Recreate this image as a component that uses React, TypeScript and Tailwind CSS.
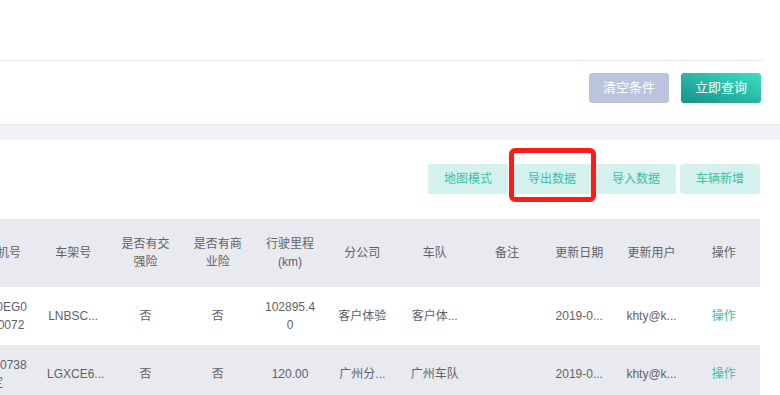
import React from 'react'

const font = { fontFamily: '"Liberation Sans", "Noto Sans CJK SC", sans-serif' }

const headers = ['发动机号', '车架号', '是否有交强险', '是否有商业险', '行驶里程(km)', '分公司', '车队', '备注', '更新日期', '更新用户', '操作']

const rows = [
  { engine: ['4A1S0EG0', '00B00072'], vin: 'LNBSC...', jq: '否', sy: '否', km: '102895.40', branch: '客户体验', team: '客户体...', note: '', date: '2019-0...', user: 'khty@k...' },
  { engine: ['SQR40738', '定'], vin: 'LGXCE6...', jq: '否', sy: '否', km: '120.00', branch: '广州分...', team: '广州车队', note: '', date: '2019-0...', user: 'khty@k...' },
]

export default function App() {
  return (
    <div className="w-[780px] h-[395px] overflow-hidden bg-[#f0f2f5]" style={font}>
      {/* 查询条件 */}
      <div className="bg-white h-[124px] pr-[17px]">
        <div className="h-[61px] border-b border-[#e3e8ee]" />
        <div className="flex justify-end gap-3 pt-[12px] pr-[2px]">
          <button className="w-[80px] h-[30px] rounded-[3px] bg-[#bac4dd] text-white text-[13px]">清空条件</button>
          <button className="w-[80px] h-[30px] rounded-[3px] bg-gradient-to-tr from-[#16918c] to-[#3be0bf] text-white text-[13px]">立即查询</button>
        </div>
      </div>

      <div className="h-[16px] border-t border-[#e2ecef]" />

      {/* 列表 */}
      <div className="bg-white h-[255px] pr-[20px]">
        <div className="flex justify-end gap-1 pt-[24px]">
          <button className="w-[80px] h-[30px] rounded-[3px] bg-[#d4f1ee] text-[#3cbfa8] text-[12px]">地图模式</button>
          <div className="relative">
            <button className="w-[80px] h-[30px] rounded-[3px] bg-[#d4f1ee] text-[#3cbfa8] text-[12px]">导出数据</button>
            <div className="absolute -left-[3px] -right-[4px] -top-[16px] -bottom-[8px] border-[5px] border-[#ff1a1a] rounded-[6px]" />
          </div>
          <button className="w-[80px] h-[30px] rounded-[3px] bg-[#d4f1ee] text-[#3cbfa8] text-[12px]">导入数据</button>
          <button className="w-[80px] h-[30px] rounded-[3px] bg-[#d4f1ee] text-[#3cbfa8] text-[12px]">车辆新增</button>
        </div>

        <div className="flex justify-end overflow-hidden mt-[25px]">
          <table className="w-[803px] shrink-0 table-fixed border-t border-[#e6e6e6] text-[12px] text-[#5f6268] leading-[18px]">
            <colgroup>
              <col className="w-[80px]" />
            </colgroup>
            <thead>
              <tr className="h-[67px] bg-[#e9eaef]">
                {headers.map((h, i) => (
                  <th key={i} className="font-normal px-[10px] text-center break-all">{h}</th>
                ))}
              </tr>
            </thead>
            <tbody>
              {rows.map((r, i) => (
                <tr key={i} className={i % 2 === 0 ? 'h-[58px] bg-white' : 'h-[58px] bg-[#e9eaef]'}>
                  <td className="px-[10px] text-center whitespace-nowrap">
                    {r.engine.map((l, k) => <div key={k}>{l}</div>)}
                  </td>
                  <td className="px-[10px] text-center whitespace-nowrap">{r.vin}</td>
                  <td className="px-[10px] text-center">{r.jq}</td>
                  <td className="px-[10px] text-center">{r.sy}</td>
                  <td className="px-[10px] text-center break-all">{r.km}</td>
                  <td className="px-[10px] text-center whitespace-nowrap">{r.branch}</td>
                  <td className="px-[10px] text-center whitespace-nowrap">{r.team}</td>
                  <td className="px-[10px] text-center">{r.note}</td>
                  <td className="px-[10px] text-center whitespace-nowrap">{r.date}</td>
                  <td className="px-[10px] text-center whitespace-nowrap">{r.user}</td>
                  <td className="px-[10px] text-center text-[#3cbfa8]">操作</td>
                </tr>
              ))}
            </tbody>
          </table>
        </div>
      </div>
    </div>
  )
}
